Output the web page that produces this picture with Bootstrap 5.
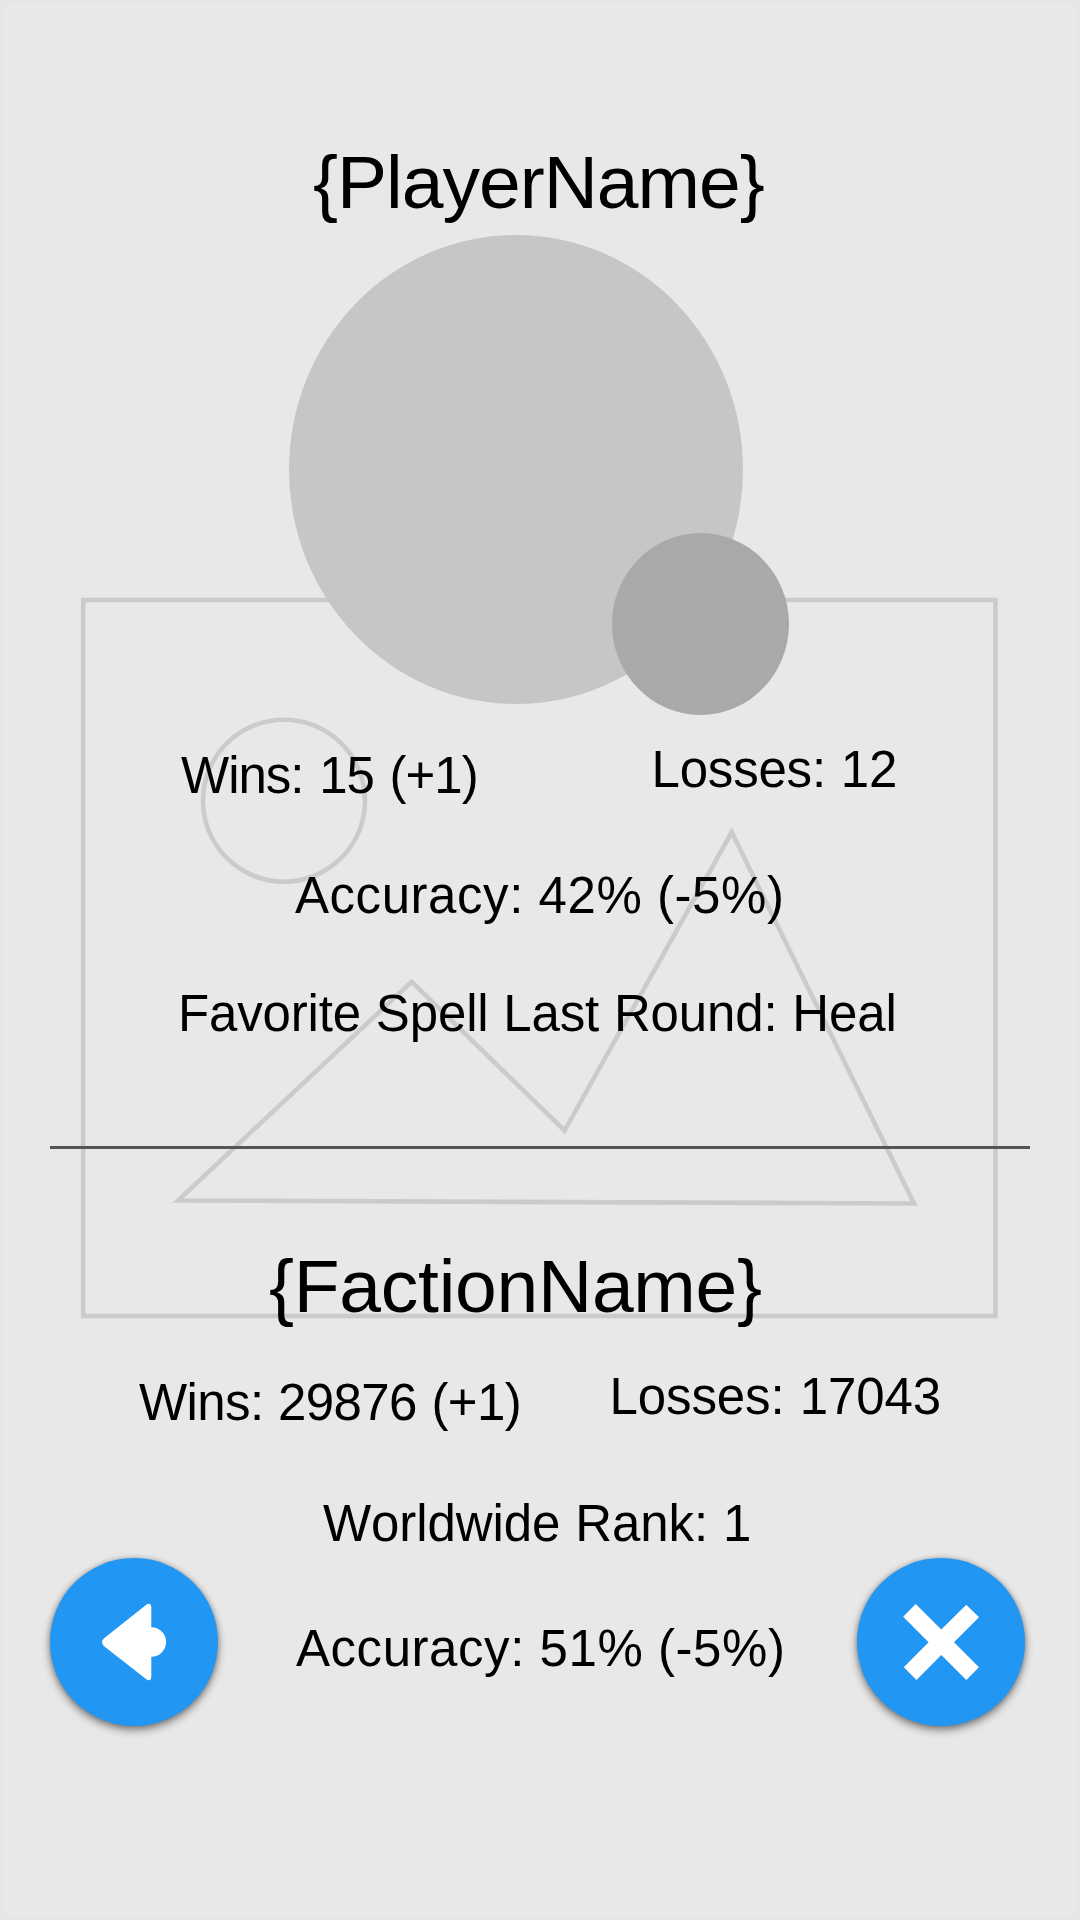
<!DOCTYPE html>
<html lang="en">
<head>
<meta charset="utf-8">
<meta name="viewport" content="width=device-width, initial-scale=1">
<title>Player results</title>
<link href="https://cdn.jsdelivr.net/npm/bootstrap@5.3.0/dist/css/bootstrap.min.css" rel="stylesheet">
<style>
  body { background: #e8e8e8; color: #000; font-family: "Liberation Sans", Arial, sans-serif; }
  .screen { width: 1080px; height: 1920px; padding-top: 137px; font-kerning: none; isolation: isolate; box-shadow: inset 0 0 0 3px #e6e6e6; }
  .backdrop { z-index: -1; fill: none; stroke: #cbcbcb; stroke-width: 4.6px; }
  .title-line { font-size: 75px; line-height: 90px; font-weight: 400; white-space: nowrap; }
  .stat-line { font-size: 51px; line-height: 60px; white-space: nowrap; }
  .lowered { margin-top: 6px; }
  .player-title { margin-left: 313px; letter-spacing: -1px; }
  .avatar { width: 454px; height: 469px; margin: 8px 0 0 289px; background: #c6c6c6; }
  .avatar-badge { left: 323px; top: 298px; width: 177px; height: 182px; background: #a9a9a9; }
  .record { margin-top: 36px; }
  .player-wins { margin-left: 181px; width: 470.5px; letter-spacing: -1px; word-spacing: 2.5px; }
  .player-losses { letter-spacing: -.2px; word-spacing: 1px; }
  .player-accuracy { margin: 60px 0 0 295px; letter-spacing: .55px; }
  .player-spell { margin: 58px 0 0 178px; letter-spacing: -.15px; word-spacing: .8px; }
  .divider { height: 3px; margin: 102px 50px 0; background: #555; }
  .faction-title { margin: 92px 0 0 269px; letter-spacing: -.25px; }
  .faction-wins { margin-left: 139px; width: 470.5px; letter-spacing: -.6px; word-spacing: 1px; }
  .faction-losses { letter-spacing: -.1px; word-spacing: 1px; }
  .faction-rank { margin: 61px 0 0 323px; letter-spacing: -.1px; word-spacing: 1px; }
  .actions { margin-top: 4px; padding: 0 55px 0 50px; }
  .faction-accuracy { margin: 61px 0 0 78px; letter-spacing: .55px; }
  .round-btn { width: 168px; height: 168px; background: #2196f3; box-shadow: 0 4px 9px rgba(0,0,0,.45), 0 0 5px rgba(0,0,0,.2); }
  .round-btn svg { width: 168px; height: 168px; fill: #fff; }
</style>
</head>
<body>
<main class="screen position-relative overflow-hidden d-flex flex-column">
  <svg class="backdrop position-absolute top-0 start-0" width="1080" height="1920" viewBox="0 0 1080 1920" aria-hidden="true">
    <rect x="83.2" y="600" width="912.2" height="716"/>
    <circle cx="284" cy="800.7" r="81"/>
    <path d="M178 1200.5L411.6 981.7L564.5 1130.5L731.7 832.3L914 1203.5Z"/>
  </svg>

  <h1 class="title-line player-title mb-0">{PlayerName}</h1>
  <div class="avatar rounded-circle position-relative flex-shrink-0">
    <div class="avatar-badge rounded-circle position-absolute"></div>
  </div>

  <div class="record d-flex">
    <div class="stat-line lowered player-wins">Wins: 15 (+1)</div>
    <div class="stat-line player-losses">Losses: 12</div>
  </div>
  <div class="stat-line player-accuracy">Accuracy: 42% (-5%)</div>
  <div class="stat-line player-spell">Favorite Spell Last Round: Heal</div>

  <div class="divider flex-shrink-0"></div>

  <h2 class="title-line faction-title mb-0">{FactionName}</h2>
  <div class="record d-flex">
    <div class="stat-line lowered faction-wins">Wins: 29876 (+1)</div>
    <div class="stat-line faction-losses">Losses: 17043</div>
  </div>
  <div class="stat-line faction-rank">Worldwide Rank: 1</div>

  <div class="actions d-flex align-items-start">
    <button type="button" class="round-btn btn rounded-circle border-0 p-0 flex-shrink-0 d-flex" aria-label="Back">
      <svg viewBox="0 0 168 168"><path d="M53.8 80.5L95.3 47.5Q98 45.2 100 46.1Q101.3 46.8 101.3 49.5V69.2A14.8 14.8 0 0 1 101.3 98.8V118.5Q101.3 121.3 100 121.9Q98 122.8 95.3 120.5L53.8 88Q50.2 84.2 53.8 80.5Z"/></svg>
    </button>
    <div class="stat-line faction-accuracy">Accuracy: 51% (-5%)</div>
    <button type="button" class="round-btn btn rounded-circle border-0 p-0 flex-shrink-0 d-flex ms-auto" aria-label="Close">
      <svg viewBox="0 0 168 168"><path d="M58.7 46L84.3 71.4L109.3 46.7L122 59.3L97 84.3L122 109.3L109.3 122L84.3 97L59.5 122L46.8 109.3L71.6 84.3L46.2 58.7Z"/></svg>
    </button>
  </div>
</main>
<script src="https://cdn.jsdelivr.net/npm/bootstrap@5.3.0/dist/js/bootstrap.bundle.min.js"></script>
</body>
</html>
